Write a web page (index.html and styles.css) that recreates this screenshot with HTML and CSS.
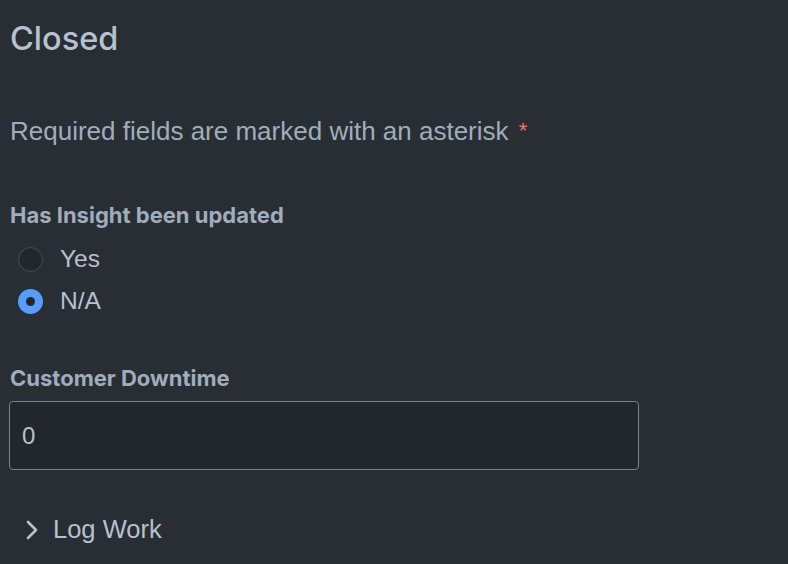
FILE: index.html
```html
<!DOCTYPE html>
<html lang="en">
<head>
    <meta charset="UTF-8">
    <title>Closed</title>
    <link rel="stylesheet" href="styles.css">
</head>
<body>
    <div class="panel">
        <h1 class="title">Closed</h1>
        <p class="hint">Required fields are marked with an asterisk <span class="star">*</span></p>

        <div class="field">
            <div class="label">Has Insight been updated</div>
            <ul class="radios">
                <li class="radio"><span class="dot"></span>Yes</li>
                <li class="radio"><span class="dot checked"></span>N/A</li>
            </ul>
        </div>

        <div class="field">
            <div class="label">Customer Downtime</div>
            <div class="input">0</div>
        </div>

        <div class="section">
            <svg class="chev" width="14" height="20" viewBox="0 0 14 20">
                <path d="M3 2 L11 10 L3 18" fill="none" stroke="#b6c2cf" stroke-width="2.6" stroke-linecap="round" stroke-linejoin="round"/>
            </svg>
            <span>Log Work</span>
        </div>
    </div>
</body>
</html>
```

FILE: styles.css
```css
*{
    margin: 0;
    padding: 0;
    box-sizing: border-box;
}
li{
    list-style: none;
}
body{
    background: #282e33;
    font-family: "Liberation Sans", Arial, sans-serif;
    color: #b6c2cf;
}

.panel{
    padding: 19px 10px 0 10px;
}

.title{
    font-family: Inter, "Liberation Sans", sans-serif;
    font-size: 32.5px;
    line-height: 40px;
    font-weight: 500;
    color: #b6c2cf;
}

.hint{
    margin-top: 57px;
    font-size: 26px;
    line-height: 30px;
    color: #9fadbc;
}
.star{
    color: #f87168;
    font-size: 22px;
    margin-left: 3px;
    vertical-align: 2px;
}

.field{
    margin-top: 57px;
}
.field + .field{
    margin-top: 44px;
}

.label{
    font-family: Inter, "Liberation Sans", sans-serif;
    font-size: 22px;
    line-height: 24px;
    font-weight: 700;
    color: #9fadbc;
}

.radios{
    margin-top: 11px;
}
.radio{
    display: flex;
    align-items: center;
    height: 42px;
    padding-left: 8px;
    font-size: 24.5px;
    color: #b6c2cf;
}
.dot{
    width: 25px;
    height: 25px;
    border-radius: 50%;
    border: 1.5px solid #454f59;
    background: #22272b;
    margin-right: 17px;
    display: flex;
    align-items: center;
    justify-content: center;
}
.dot.checked{
    border: none;
    background: #579dff;
}
.dot.checked::after{
    content: "";
    width: 9px;
    height: 9px;
    border-radius: 50%;
    background: #22272b;
}

.input{
    margin-top: 11px;
    margin-left: -1px;
    width: 630px;
    height: 69px;
    border: 1px solid #738496;
    border-radius: 4px;
    background: #22272b;
    padding-left: 12px;
    font-size: 24px;
    line-height: 67px;
    color: #b6c2cf;
}

.section{
    margin-top: 45px;
    display: flex;
    align-items: center;
    padding-left: 15px;
    font-size: 25.5px;
    color: #b6c2cf;
}
.chev{
    margin-right: 14px;
}
```
